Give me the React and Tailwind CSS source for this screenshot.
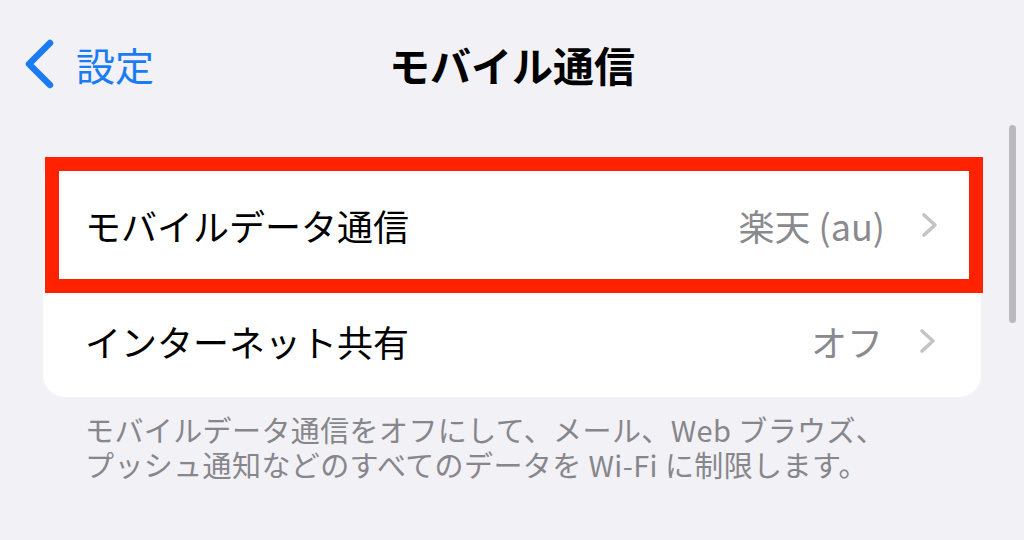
import React from 'react';

const ChevronRight = () => (
  <svg className="h-[26px] w-[18px]" viewBox="0 0 18 26" fill="none" stroke="#c4c4c7" strokeWidth={3.6} strokeLinecap="round" strokeLinejoin="round">
    <path d="M3 3l11 10L3 23" />
  </svg>
);

const Row = ({ label, value, className = '' }) => (
  <div className={`flex items-center justify-between ${className}`}>
    <span className="text-[36px] leading-[40px] text-black">{label}</span>
    <div className="flex items-center gap-[36px]">
      <span className="text-[36px] leading-[40px] text-[#8a8a8e]">{value}</span>
      <ChevronRight />
    </div>
  </div>
);

const App = () => {
  return (
    <div
      className="relative h-[540px] w-[1024px] overflow-hidden bg-[#f2f1f6]"
      style={{ fontFamily: '"Noto Sans CJK JP", "Noto Sans", sans-serif' }}
    >
      {/* Header */}
      <header className="relative flex h-[128px] items-center">
        <div className="flex items-center pl-[24px]">
          <svg className="h-[50px] w-[32px]" viewBox="0 0 32 50" fill="none" stroke="#1a7cf5" strokeWidth={6.5} strokeLinecap="round" strokeLinejoin="round">
            <path d="M26 4L5 25l21 21" />
          </svg>
          <span className="ml-[20px] text-[39px] leading-[44px] text-[#1a7cf5]">設定</span>
        </div>
        <h1 className="absolute left-0 right-0 text-center text-[41px] font-bold leading-[44px] text-black">
          モバイル通信
        </h1>
      </header>

      {/* Card */}
      <main className="px-[43px] pt-[29px]">
        <div className="rounded-[22px] bg-white">
          <Row
            label="モバイルデータ通信"
            value="楽天 (au)"
            className="ml-[2px] -mr-[2px] h-[136px] border-[14px] border-[#ff2200] pl-[26px] pr-[30px]"
          />
          <Row label="インターネット共有" value="オフ" className="h-[104px] pb-[9px] pl-[42px] pr-[44px]" />
        </div>
        <p className="mt-[15px] pl-[42px] text-[29px] leading-[35px] tracking-[0.4px] text-[#87868b]">
          <span className="block">モバイルデータ通信をオフにして、メール、Web ブラウズ、</span>
          <span className="block">プッシュ通知などのすべてのデータを Wi-Fi に制限します。</span>
        </p>
      </main>

      {/* Scrollbar */}
      <div className="absolute right-[8px] top-[125px] h-[198px] w-[7px] rounded-full bg-[#b9b9bd]" />
    </div>
  );
};

export default App;
